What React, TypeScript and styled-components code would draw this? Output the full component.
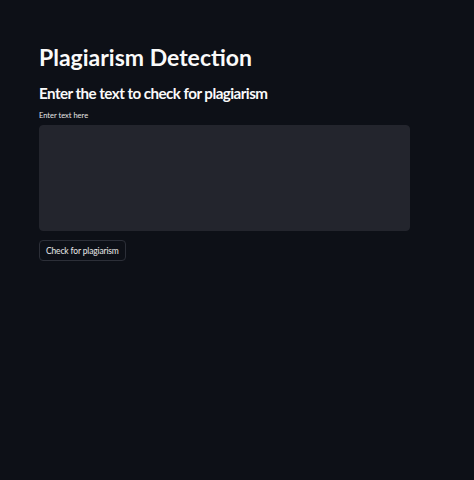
import styled, { createGlobalStyle } from "styled-components"

const Global = createGlobalStyle`
    html, body {
        margin: 0;
        padding: 0;
        background: #0d1017;
    }
    body {
        font-family: Lato, "Noto Sans", sans-serif;
        color: #fafafa;
    }
`

export default function App() {
    return <>
        <Global />
        <Page>
            <Main>
                <Title>Plagiarism Detection</Title>
                <Subtitle>Enter the text to check for plagiarism</Subtitle>
                <Field>
                    <Label htmlFor="text">Enter text here</Label>
                    <TextArea id="text" />
                </Field>
                <Button>Check for plagiarism</Button>
            </Main>
        </Page>
    </>
}

const Page = styled.div`
    width: 474px;
    height: 480px;
    background: #0d1017;
`

const Main = styled.div`
    padding: 42px 64px 0 39px;
    display: flex;
    flex-direction: column;
`

const Title = styled.h1`
    margin: 0;
    font-size: 23px;
    font-weight: 700;
    line-height: 30px;
`

const Subtitle = styled.h2`
    margin: 10px 0 0;
    font-size: 15.2px;
    font-weight: 700;
    line-height: 22px;
    letter-spacing: -0.55px;
`

const Field = styled.div`
    margin-top: 7px;
    display: flex;
    flex-direction: column;
    gap: 4px;
`

const Label = styled.label`
    font-size: 7.5px;
    line-height: 10px;
    color: #e6e6e6;
`

const TextArea = styled.textarea`
    width: 371px;
    height: 106px;
    box-sizing: border-box;
    background: #23252d;
    border: 1px solid #23252d;
    border-radius: 4px;
    resize: none;
    outline: none;
    color: #fafafa;
`

const Button = styled.button`
    margin-top: 9px;
    align-self: flex-start;
    height: 21px;
    padding: 0 6px;
    background: #0d1017;
    border: 1px solid #2c2f38;
    border-radius: 4px;
    color: #e8e8e8;
    font-family: Lato, sans-serif;
    font-size: 8.5px;
    letter-spacing: -0.15px;
`
